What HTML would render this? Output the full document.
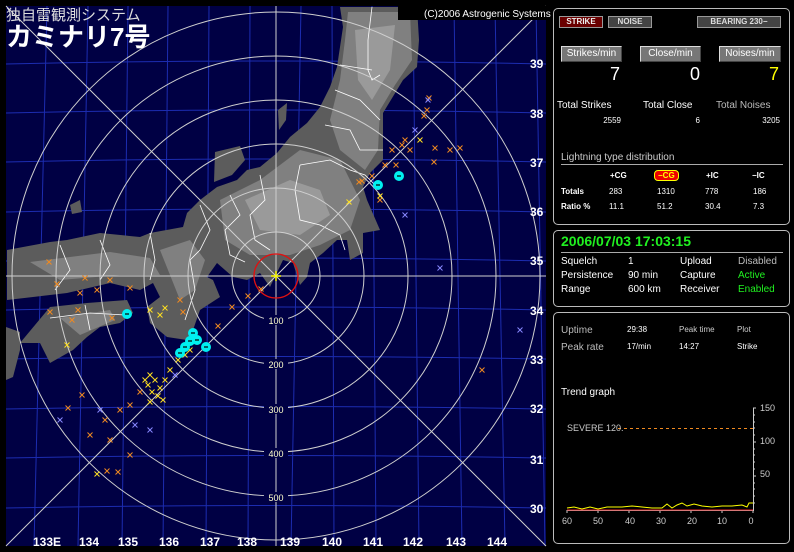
<!DOCTYPE html>
<html><head><meta charset="utf-8"><style>
body{margin:0;background:#000;width:794px;height:552px;overflow:hidden;position:relative;font-family:"Liberation Sans",sans-serif;color:#fff}
.a{position:absolute;white-space:nowrap}
.panel{position:absolute;border:1px solid #bbb;border-radius:5px}
.btn{position:absolute;background:#777;border:1px solid #ddd;border-right-color:#444;border-bottom-color:#444;color:#fff;font-size:10px;text-align:center;line-height:14px}
.sb{position:absolute;border:1px solid #999;font-size:8px;font-weight:bold;text-align:center;line-height:10px;color:#ddd;background:#444}
.s{font-size:10px}
.t{font-size:8px;font-weight:bold}
</style></head><body>
<svg class="a" style="left:0;top:0" width="552" height="552" viewBox="0 0 552 552">
<defs>
<g id="xo"><path d="M-2.5,-2.5L2.5,2.5M2.5,-2.5L-2.5,2.5" stroke="#f08a20" stroke-width="1"/></g>
<g id="xy"><path d="M-2.5,-2.5L2.5,2.5M2.5,-2.5L-2.5,2.5" stroke="#ffe020" stroke-width="1"/></g>
<g id="xb"><path d="M-2.5,-2.5L2.5,2.5M2.5,-2.5L-2.5,2.5" stroke="#8888ff" stroke-width="1"/></g>
<g id="cy"><circle r="5" fill="#00f0f0"/><path d="M-2,0H2" stroke="#000" stroke-width="1.2"/></g>
</defs>
<rect x="6" y="6" width="540" height="540" fill="#000044"/>
<g stroke="#1c2cb0" stroke-width="1" fill="none">
<path d="M6,64Q276,58 546,64M6,113Q276,107 546,113M6,162Q276,156 546,162M6,212Q276,206 546,212M6,261Q276,255 546,261M6,310Q276,304 546,310M6,359Q276,354 546,359M6,409Q276,404 546,409M6,458Q276,453 546,458M6,508Q276,503 546,508"/>
<path d="M47,6L34,546M88,6L78,546M128,6L122,546M168,6L163,546M209,6L206,546M250,6L248,546M301,6L291,546M332,6L334,546M372,6L376,546M413,6L419,546M454,6L462,546M495,6L505,546M536,6L545,546"/>
</g>
<g fill="#5c5c5c">
<path d="M340,7L417,7L419,40L417,67L403,80L383,113L383,133L383,160L370,173L363,187L367,200L380,230L363,233L363,253L350,260L347,240L337,240L323,253L310,263L307,277L300,285L293,263L283,260L270,287L260,273L247,280L233,277L217,263L207,277L213,280L220,297L200,310L193,330L187,340L167,337L150,323L147,307L160,297L153,283L140,290L110,283L67,293L33,297L7,300L7,250L50,242L67,240L100,233L140,237L150,233L183,227L187,213L200,200L217,187L237,180L247,170L260,167L277,153L290,137L307,123L320,107L330,87L337,67L343,27Z"/>
<path d="M215,152L240,146L245,160L232,175L214,182Z"/>
<path d="M278,110L287,103L286,120L279,130Z"/>
<path d="M50,307L87,303L127,300L133,313L120,323L100,327L87,337L73,350L50,363L40,343L20,343Z"/>
<path d="M6,327L20,332L20,350L13,377L6,380Z"/>
<path d="M70,205L80,200L82,212L72,214Z"/>
</g>
<g fill="#808080">
<path d="M348,12L410,12L412,60L395,85L380,110L378,150L365,170L340,150L330,120L340,80L345,40Z"/>
<path d="M220,200L260,180L300,150L340,160L360,200L350,230L320,245L290,255L250,255L225,240Z"/>
<path d="M30,262L110,252L150,258L160,275L120,275L60,280Z"/>
<path d="M160,250L190,240L205,260L195,290L180,300Z"/>
<path d="M60,318L110,310L115,320L80,335Z"/>
</g>
<g fill="#9a9a9a">
<path d="M355,30L395,25L390,70L372,100L358,80Z"/>
<path d="M245,200L290,180L320,190L330,215L300,235L260,230Z"/>
</g>
<g stroke="#fff" stroke-width="0.8" fill="none">
<path d="M372,7L368,40L368,70L372,80L380,75M340,65L372,70M335,90L360,100L380,120M325,125L350,130L360,150L383,150M300,165L330,160L350,170L365,175L375,185"/>
<path d="M300,165L295,190L300,220L320,225L340,235L345,250M260,175L265,200L250,215L255,240L270,250M230,195L240,215L225,230L230,255L245,262M200,205L210,230L200,250L190,260"/>
<path d="M150,233L155,260L150,280M100,240L110,265L100,280M60,245L70,270L55,290M190,260L195,290L185,320M50,318L90,313L125,315M85,305L90,330"/>
</g>
<g stroke="#cfcfcf" stroke-width="1" fill="none">
<circle cx="276" cy="276" r="44"/><circle cx="276" cy="276" r="88"/><circle cx="276" cy="276" r="132"/><circle cx="276" cy="276" r="176"/><circle cx="276" cy="276" r="220"/><circle cx="276" cy="276" r="264"/>
<path d="M6,276H546M276,6V546M6,6L546,546M546,6L6,546"/>
</g>
<circle cx="276" cy="276" r="22" stroke="#e01010" stroke-width="1.3" fill="none"/>
<path d="M271,276H281M276,271V281" stroke="#ffff00" stroke-width="1.5"/>
<g font-size="9" fill="#ffffcc" text-anchor="middle" font-family="Liberation Sans">
<rect x="264" y="315" width="24" height="10" fill="#000044"/><text x="276" y="324">100</text>
<rect x="264" y="359" width="24" height="10" fill="#000044"/><text x="276" y="368">200</text>
<rect x="264" y="404" width="24" height="10" fill="#000044"/><text x="276" y="413">300</text>
<rect x="264" y="448" width="24" height="10" fill="#000044"/><text x="276" y="457">400</text>
<rect x="264" y="492" width="24" height="10" fill="#000044"/><text x="276" y="501">500</text>
</g>
<g font-size="12" font-weight="bold" fill="#fff" font-family="Liberation Sans">
<text x="530" y="68">39</text><text x="530" y="118">38</text><text x="530" y="167">37</text><text x="530" y="216">36</text><text x="530" y="265">35</text><text x="530" y="315">34</text><text x="530" y="364">33</text><text x="530" y="413">32</text><text x="530" y="464">31</text><text x="530" y="513">30</text>
<g text-anchor="middle"><text x="47" y="546">133E</text><text x="89" y="546">134</text><text x="128" y="546">135</text><text x="169" y="546">136</text><text x="210" y="546">137</text><text x="247" y="546">138</text><text x="290" y="546">139</text><text x="332" y="546">140</text><text x="373" y="546">141</text><text x="413" y="546">142</text><text x="456" y="546">143</text><text x="497" y="546">144</text></g>
</g>
<g>
<use href="#xo" x="49" y="262"/><use href="#xo" x="57" y="284"/><use href="#xo" x="85" y="278"/><use href="#xo" x="97" y="290"/><use href="#xo" x="110" y="280"/><use href="#xo" x="80" y="293"/><use href="#xo" x="130" y="288"/><use href="#xo" x="78" y="310"/><use href="#xo" x="72" y="320"/><use href="#xo" x="50" y="312"/><use href="#xo" x="112" y="318"/><use href="#xo" x="180" y="300"/><use href="#xo" x="183" y="312"/>
<use href="#xy" x="67" y="345"/><use href="#xy" x="150" y="310"/><use href="#xy" x="165" y="308"/><use href="#xy" x="160" y="315"/>
<use href="#xo" x="218" y="326"/><use href="#xo" x="232" y="307"/><use href="#xo" x="248" y="296"/><use href="#xo" x="261" y="289"/>
<use href="#xy" x="150" y="375"/><use href="#xy" x="155" y="380"/><use href="#xy" x="148" y="385"/><use href="#xy" x="160" y="388"/><use href="#xy" x="152" y="392"/><use href="#xy" x="145" y="380"/><use href="#xy" x="158" y="396"/><use href="#xy" x="165" y="380"/><use href="#xy" x="170" y="370"/><use href="#xy" x="178" y="360"/><use href="#xy" x="185" y="355"/><use href="#xy" x="190" y="350"/><use href="#xy" x="163" y="400"/><use href="#xy" x="150" y="402"/>
<use href="#xo" x="140" y="392"/><use href="#xo" x="130" y="405"/><use href="#xo" x="120" y="410"/><use href="#xo" x="105" y="420"/><use href="#xo" x="90" y="435"/><use href="#xo" x="130" y="455"/><use href="#xo" x="110" y="440"/><use href="#xo" x="118" y="472"/><use href="#xo" x="107" y="471"/><use href="#xy" x="97" y="474"/><use href="#xo" x="68" y="408"/><use href="#xo" x="82" y="395"/>
<use href="#xb" x="100" y="410"/><use href="#xb" x="135" y="425"/><use href="#xb" x="150" y="430"/><use href="#xb" x="175" y="375"/><use href="#xb" x="60" y="420"/>
<use href="#xo" x="362" y="181"/><use href="#xo" x="372" y="176"/><use href="#xo" x="385" y="165"/><use href="#xo" x="392" y="150"/><use href="#xo" x="402" y="145"/><use href="#xo" x="410" y="150"/><use href="#xo" x="396" y="165"/><use href="#xo" x="405" y="140"/><use href="#xo" x="429" y="98"/><use href="#xo" x="427" y="110"/><use href="#xo" x="424" y="116"/><use href="#xo" x="435" y="148"/><use href="#xo" x="450" y="150"/><use href="#xo" x="460" y="148"/><use href="#xo" x="434" y="162"/><use href="#xo" x="380" y="200"/><use href="#xo" x="482" y="370"/><use href="#xo" x="359" y="182"/>
<use href="#xy" x="349" y="202"/><use href="#xy" x="380" y="196"/><use href="#xy" x="420" y="140"/>
<use href="#xb" x="428" y="100"/><use href="#xb" x="415" y="130"/><use href="#xb" x="405" y="215"/><use href="#xb" x="520" y="330"/><use href="#xb" x="440" y="268"/>
<use href="#cy" x="127" y="314"/><use href="#cy" x="193" y="333"/><use href="#cy" x="190" y="341"/><use href="#cy" x="197" y="340"/><use href="#cy" x="185" y="347"/><use href="#cy" x="180" y="353"/><use href="#cy" x="206" y="347"/><use href="#cy" x="378" y="185"/><use href="#cy" x="399" y="176"/>
</g>
<rect x="398" y="6" width="154" height="14" fill="#000"/>
<text x="424" y="17" font-size="10" fill="#fff" font-family="Liberation Sans">(C)2006 Astrogenic Systems</text>
<text x="6" y="20" font-size="15" fill="#ddd" font-family="Liberation Sans,Noto Sans CJK JP,sans-serif">独自雷観測システム</text>
<text x="6" y="46" font-size="26" font-weight="bold" fill="#fff" font-family="Liberation Sans,Noto Sans CJK JP,sans-serif">カミナリ7号</text>
</svg>

<div class="panel" style="left:553px;top:8px;width:235px;height:215px"></div>
<div class="sb" style="left:559px;top:16px;width:42px;background:#6a0000;color:#eee">STRIKE</div>
<div class="sb" style="left:608px;top:16px;width:42px">NOISE</div>
<div class="sb" style="left:697px;top:16px;width:82px">BEARING 230−</div>
<div class="btn" style="left:561px;top:46px;width:59px">Strikes/min</div>
<div class="btn" style="left:640px;top:46px;width:59px">Close/min</div>
<div class="btn" style="left:719px;top:46px;width:60px">Noises/min</div>
<div class="a" style="left:600px;top:64px;font-size:18px;width:20px;text-align:right">7</div>
<div class="a" style="left:680px;top:64px;font-size:18px;width:20px;text-align:right">0</div>
<div class="a" style="left:759px;top:64px;font-size:18px;width:20px;text-align:right;color:#ff0">7</div>
<div class="a s" style="left:557px;top:100px">Total Strikes</div>
<div class="a s" style="left:643px;top:100px">Total Close</div>
<div class="a s" style="left:716px;top:100px;color:#bbb">Total Noises</div>
<div class="a t" style="left:570px;top:116px;width:51px;text-align:right;font-weight:normal">2559</div>
<div class="a t" style="left:650px;top:116px;width:50px;text-align:right;font-weight:normal">6</div>
<div class="a t" style="left:730px;top:116px;width:50px;text-align:right;font-weight:normal">3205</div>
<div class="a s" style="left:561px;top:152px;color:#ccc">Lightning type distribution</div>
<div class="a" style="left:561px;top:164px;width:222px;height:1px;background:#aaa"></div>
<div class="a t" style="left:610px;top:171px">+CG</div>
<div class="a t" style="left:654px;top:170px;background:#e00;color:#ff0;border:1px solid #ff0;border-radius:4px;padding:0 3px">−CG</div>
<div class="a t" style="left:706px;top:171px">+IC</div>
<div class="a t" style="left:752px;top:171px">−IC</div>
<div class="a t" style="left:561px;top:187px">Totals</div>
<div class="a t" style="left:609px;top:187px;font-weight:normal">283</div>
<div class="a t" style="left:657px;top:187px;font-weight:normal">1310</div>
<div class="a t" style="left:705px;top:187px;font-weight:normal">778</div>
<div class="a t" style="left:753px;top:187px;font-weight:normal">186</div>
<div class="a t" style="left:561px;top:202px">Ratio %</div>
<div class="a t" style="left:609px;top:202px;font-weight:normal">11.1</div>
<div class="a t" style="left:657px;top:202px;font-weight:normal">51.2</div>
<div class="a t" style="left:705px;top:202px;font-weight:normal">30.4</div>
<div class="a t" style="left:753px;top:202px;font-weight:normal">7.3</div>

<div class="panel" style="left:553px;top:230px;width:235px;height:75px"></div>
<div class="a" style="left:561px;top:233px;font-size:14px;font-weight:bold;color:#20f020">2006/07/03 17:03:15</div>
<div class="a" style="left:561px;top:252px;width:222px;height:1px;background:#aaa"></div>
<div class="a s" style="left:561px;top:255px;line-height:14px">Squelch<br>Persistence<br>Range</div>
<div class="a s" style="left:628px;top:255px;line-height:14px">1<br>90 min<br>600 km</div>
<div class="a s" style="left:680px;top:255px;line-height:14px">Upload<br>Capture<br>Receiver</div>
<div class="a s" style="left:738px;top:255px;line-height:14px;color:#20f020"><span style="color:#bbb">Disabled</span><br>Active<br>Enabled</div>

<div class="panel" style="left:553px;top:312px;width:235px;height:230px"></div>
<div class="a s" style="left:561px;top:322px;color:#bbb;line-height:17px">Uptime<br>Peak rate</div>
<div class="a t" style="left:627px;top:321px;line-height:17px;font-weight:normal">29:38<br>17/min</div>
<div class="a t" style="left:679px;top:321px;line-height:17px;font-weight:normal;color:#ccc">Peak time<br><span style="color:#fff">14:27</span></div>
<div class="a t" style="left:737px;top:321px;line-height:17px;font-weight:normal;color:#ccc">Plot<br><span style="color:#fff">Strike</span></div>
<div class="a s" style="left:561px;top:387px">Trend graph</div>
<svg class="a" style="left:552px;top:398px" width="242" height="130">
<g stroke="#ccc" stroke-width="1" fill="none">
<path d="M201.5,10V112M15,112.5H202"/>
<path d="M201,10h3M201,17h2M201,24h2M201,30h2M201,37h2M201,44h3M201,51h2M201,57h2M201,64h2M201,71h2M201,78h3M201,85h2M201,91h2M201,98h2M201,105h2"/>
<path d="M15,112v3M46,112v3M77,112v3M108,112v3M139,112v3M170,112v3M201,112v3"/>
</g>
<path d="M66,30.5H201" stroke="#f08a20" stroke-dasharray="3,3"/>
<path d="M15,110L22,109L30,111L38,109L46,111L55,109L70,109L80,108L90,109L100,110L110,110L115,106L120,110L125,107L130,105L135,108L142,106L150,108L160,109L170,108L180,108L190,107L195,109L197,105L201,105" stroke="#ffff00" fill="none"/>
<path d="M15,112H201" stroke="#e02020"/>
<g font-size="9" fill="#ccc" font-family="Liberation Sans">
<text x="15" y="33">SEVERE 120.</text>
<text x="208" y="13">150</text><text x="208" y="46">100</text><text x="208" y="79">50</text>
<g text-anchor="middle"><text x="15" y="126">60</text><text x="46" y="126">50</text><text x="78" y="126">40</text><text x="109" y="126">30</text><text x="140" y="126">20</text><text x="170" y="126">10</text><text x="199" y="126">0</text></g>
</g>
</svg>
</body></html>
